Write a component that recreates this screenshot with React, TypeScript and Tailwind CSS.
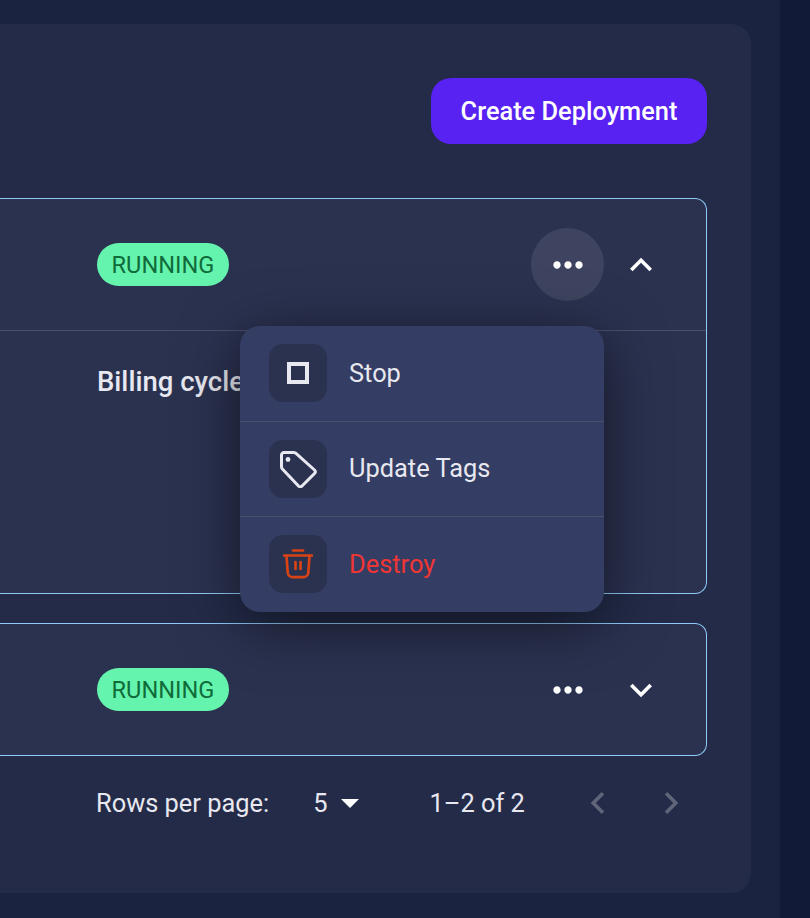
function MuiIcon({ d, className }: { d: string; className: string }) {
  return (
    <svg viewBox="0 0 24 24" fill="currentColor" className={`h-11 w-11 shrink-0 ${className}`}>
      <path d={d} />
    </svg>
  );
}

const EXPAND_LESS = 'M12 8l-6 6 1.41 1.41L12 10.83l4.59 4.58L18 14z';
const EXPAND_MORE = 'M16.59 8.59L12 13.17 7.41 8.59 6 10l6 6 6-6z';
const CHEVRON_LEFT = 'M15.41 7.41L14 6l-6 6 6 6 1.41-1.41L10.83 12z';
const CHEVRON_RIGHT = 'M10 6L8.59 7.41 13.17 12l-4.58 4.59L10 18l6-6z';
const MORE_HORIZ =
  'M6 10c-1.1 0-2 .9-2 2s.9 2 2 2 2-.9 2-2-.9-2-2-2zm12 0c-1.1 0-2 .9-2 2s.9 2 2 2 2-.9 2-2-.9-2-2-2zm-6 0c-1.1 0-2 .9-2 2s.9 2 2 2 2-.9 2-2-.9-2-2-2z';

function StatusBadge() {
  return (
    <span className="flex h-[43px] w-[132px] shrink-0 items-center justify-center rounded-full bg-[#65f4ad] pt-[2px] text-[23.6px] text-[#0f6c3a]">
      RUNNING
    </span>
  );
}

function TagIcon() {
  return (
    <svg viewBox="0 0 37 37" fill="none" stroke="#e8e8f0" strokeWidth={3} className="h-[37px] w-[37px]">
      <path d="M1.5 4a2.5 2.5 0 0 1 2.5-2.5h10a3 3 0 0 1 2 .9l18.5 16.6a2.5 2.5 0 0 1 0 3.5L22 35a2.5 2.5 0 0 1-3.5 0L2.4 18a3 3 0 0 1-.9-2z" strokeLinejoin="round" />
      <circle cx={8} cy={8.5} r={2.4} fill="#e8e8f0" stroke="none" />
    </svg>
  );
}

function TrashIcon() {
  return (
    <svg viewBox="0 0 30 30" fill="none" stroke="#d84315" strokeWidth={2.7} strokeLinecap="round" className="h-[30px] w-[30px]">
      <path d="M10 1.5h10" />
      <path d="M1 6.5h28" />
      <path d="M3.5 7l1.2 16.5a5 5 0 0 0 5 4.6h10.6a5 5 0 0 0 5-4.6L26.5 7" />
      <path d="M12.5 13v7M17.5 13v7" />
    </svg>
  );
}

function MenuItem({
  icon,
  label,
  danger = false,
  divider = true,
  heightClass = 'h-[95px]',
  labelPadding = 'pt-[15px]',
}: {
  icon: React.ReactNode;
  label: string;
  danger?: boolean;
  divider?: boolean;
  heightClass?: string;
  labelPadding?: string;
}) {
  return (
    <div className={`flex items-start gap-[22px] pl-[29px] pt-[18px] ${heightClass} ${divider ? 'border-b border-[#4a5068]' : ''}`}>
      <div className="flex h-[58px] w-[58px] items-center justify-center rounded-[14px] bg-[#2b3250]">{icon}</div>
      <span className={`${labelPadding} text-[25.4px] leading-[28px] ${danger ? 'text-[#f03535]' : 'text-[#e8e8f0]'}`}>
        {label}
      </span>
    </div>
  );
}

export default function App() {
  return (
    <div className="flex h-[918px] w-[810px] overflow-hidden bg-[#111a36] font-['Roboto',sans-serif]">
      <main className="h-full w-[780px] shrink-0 bg-[#1a2340] pt-6">
        <div className="h-[869px] w-[751px] rounded-r-[20px] bg-[#232b48] pt-[54px]">
          <div className="flex justify-end pr-11">
            <button className="h-[66px] w-[276px] rounded-[20px] bg-[#5822f2] text-[25.4px] font-medium text-white">
              Create Deployment
            </button>
          </div>

          <div className="relative mt-[54px] w-[707px]">
            <section className="h-[396px] rounded-r-xl border border-l-0 border-[#90caf9] bg-[#2b3250]">
              <div className="flex h-[132px] items-center border-b border-[#4a5068] pl-[97px]">
                <StatusBadge />
                <div className="ml-[302px] flex h-[73px] w-[73px] shrink-0 items-center justify-center rounded-full bg-[#3e445f]">
                  <MuiIcon d={MORE_HORIZ} className="text-white" />
                </div>
                <MuiIcon d={EXPAND_LESS} className="ml-[15px] text-white" />
              </div>
              <p className="pl-[97px] pt-[30px] text-[27.5px] font-medium text-[#e8e8f0]">Billing cycle</p>
            </section>

            <div className="absolute left-[240px] top-[128px] w-[364px] overflow-hidden rounded-[20px] bg-[#343d63] shadow-[0_12px_60px_rgba(0,0,0,0.55)]">
              <MenuItem
                label="Stop"
                heightClass="h-[96px]"
                icon={<div className="h-[22px] w-[22px] border-[4px] border-[#e8e8f0]" />}
              />
              <MenuItem label="Update Tags" labelPadding="pt-[14px]" icon={<TagIcon />} />
              <MenuItem label="Destroy" danger divider={false} icon={<TrashIcon />} />
            </div>

            <section className="mt-[29px] flex h-[133px] items-center rounded-r-xl border border-l-0 border-[#90caf9] bg-[#2b3250] pl-[97px]">
              <StatusBadge />
              <MuiIcon d={MORE_HORIZ} className="ml-[317px] text-white" />
              <MuiIcon d={EXPAND_MORE} className="ml-[29px] text-white" />
            </section>
          </div>

          <div className="mt-[25px] flex h-[44px] items-center pl-[96px] text-[25.4px] text-[#e8e8f0]">
            <span>Rows per page:</span>
            <span className="ml-[44px]">5</span>
            <span className="ml-[14px] h-0 w-0 border-x-[9px] border-t-[9px] border-x-transparent border-t-white" />
            <span className="ml-[70px]">1–2 of 2</span>
            <MuiIcon d={CHEVRON_LEFT} className="ml-[51px] text-[#5f6478]" />
            <MuiIcon d={CHEVRON_RIGHT} className="ml-[29px] text-[#5f6478]" />
          </div>
        </div>
      </main>
    </div>
  );
}
